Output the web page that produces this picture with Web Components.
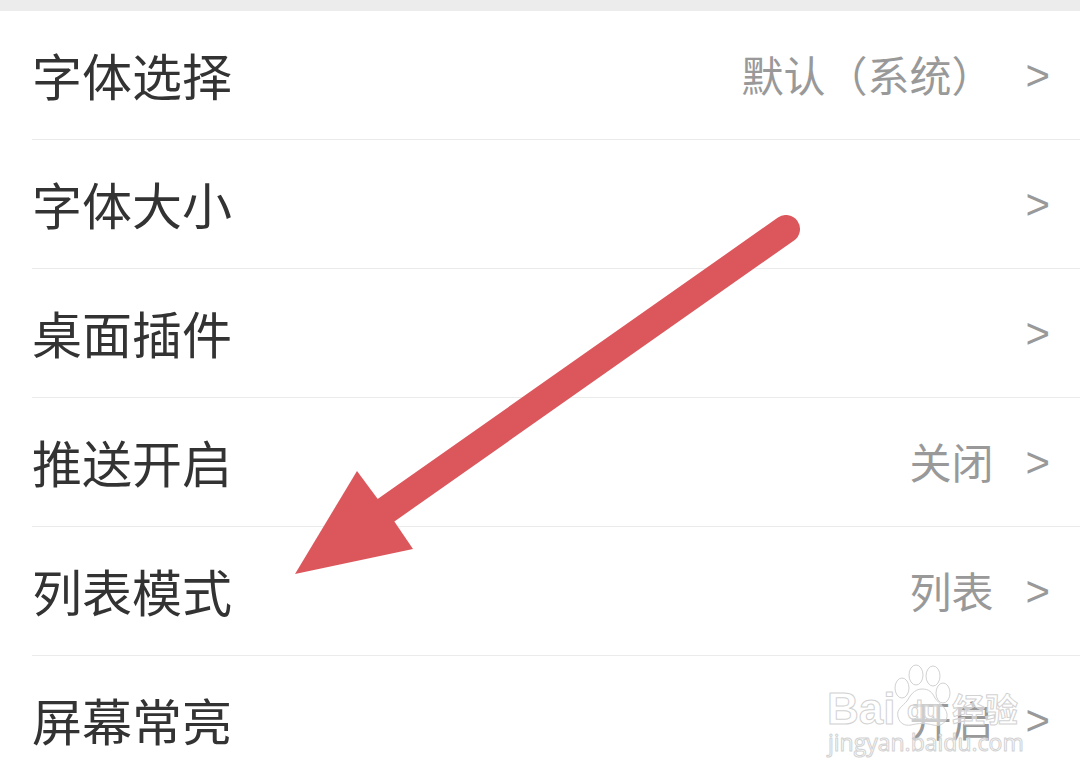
<!DOCTYPE html>
<html lang="zh-CN">
<head>
<meta charset="utf-8">
<meta name="viewport" content="width=device-width, initial-scale=1">
<title>设置</title>
<style>
  html, body { height: 100%; }
  body { margin: 0; overflow: hidden; background: #fff; font-family: "Noto Sans CJK SC", "Noto Sans", sans-serif; }
</style>
</head>
<body>
<settings-page>
  <settings-row label="字体选择" value="默认（系统）"></settings-row>
  <settings-row label="字体大小"></settings-row>
  <settings-row label="桌面插件"></settings-row>
  <settings-row label="推送开启" value="关闭"></settings-row>
  <settings-row label="列表模式" value="列表"></settings-row>
  <settings-row label="屏幕常亮" value="开启"></settings-row>
  <pointer-arrow slot="overlay"></pointer-arrow>
  <site-watermark slot="overlay"></site-watermark>
</settings-page>

<script>
class SettingsPage extends HTMLElement {
  constructor() {
    super();
    this.attachShadow({ mode: 'open' }).innerHTML = `
      <style>
        :host { display: block; position: relative; min-height: 100%; background: #fff; }
        .band { height: 11px; background: #ececec; }
        main { display: flex; flex-direction: column; padding-left: 32px; }
      </style>
      <div class="band"></div>
      <main><slot></slot></main>
      <slot name="overlay"></slot>`;
  }
}

class SettingsRow extends HTMLElement {
  constructor() {
    super();
    this.attachShadow({ mode: 'open' }).innerHTML = `
      <style>
        :host { display: block; border-bottom: 1px solid #ebebeb; }
        button {
          display: flex; align-items: center; width: 100%; height: 128px;
          margin: 0; padding: 0 30px 2px 0; border: 0; background: none; box-sizing: border-box;
          font: inherit; text-align: left; cursor: pointer;
        }
        .label { flex: 1; font-size: 50px; line-height: 72px; color: #333; }
        .value, .more { font-size: 42px; line-height: 60px; color: #999; }
        .more { margin-left: 32px; padding-top: 4px; font-family: "Liberation Sans", sans-serif; }
      </style>
      <button type="button">
        <span class="label"></span><span class="value"></span><span class="more" aria-hidden="true">&gt;</span>
      </button>`;
  }
  connectedCallback() {
    this.shadowRoot.querySelector('.label').textContent = this.getAttribute('label');
    this.shadowRoot.querySelector('.value').textContent = this.getAttribute('value') || '';
  }
}

class PointerArrow extends HTMLElement {
  constructor() {
    super();
    this.attachShadow({ mode: 'open' }).innerHTML = `
      <style>
        :host { display: block; position: absolute; left: 295px; top: 215px; pointer-events: none; }
        svg { display: block; }
      </style>
      <svg width="506" height="360" viewBox="295 215 506 360" aria-hidden="true">
        <path d="M786 229L375 518" stroke="#dc575c" stroke-width="28" stroke-linecap="round"/>
        <path d="M295 574L357 471L377 498L394 521L413 549Z" fill="#dc575c"/>
      </svg>`;
  }
}

class SiteWatermark extends HTMLElement {
  constructor() {
    super();
    this.attachShadow({ mode: 'open' }).innerHTML = `
      <style>
        :host { display: block; position: absolute; right: 56px; top: 660px; pointer-events: none; }
        svg { display: block; }
        text { font-family: "Liberation Sans", "Noto Sans CJK SC", sans-serif; }
        .brand { font-weight: 700; }
        .site { font-family: "Open Sans", sans-serif; }
      </style>
      <svg width="200" height="100" viewBox="824 660 200 100" fill="#fff" fill-opacity="0.5" stroke="#d2d2d2" stroke-width="1" stroke-linejoin="round">
        <ellipse cx="902" cy="688" rx="7" ry="10"/>
        <ellipse cx="916" cy="675" rx="7" ry="10"/>
        <ellipse cx="933" cy="676" rx="7" ry="10"/>
        <ellipse cx="943" cy="693" rx="7" ry="10"/>
        <path d="M922 689C914 689 910 696 907 701C903 706 896 709 898 717C900 724 905 726 911 725C919 723 926 723 933 725C941 727 948 722 947 714C946 707 939 704 935 698C932 692 929 689 922 689Z"/>
        <text class="brand" x="827" y="724" font-size="44">Bai</text>
        <text class="brand" x="907" y="719" font-size="26">du</text>
        <text class="brand" x="952" y="722" font-size="33">经验</text>
        <text class="site" x="828" y="751" font-size="23">jingyan.baidu.com</text>
      </svg>`;
  }
}

customElements.define('settings-page', SettingsPage);
customElements.define('settings-row', SettingsRow);
customElements.define('pointer-arrow', PointerArrow);
customElements.define('site-watermark', SiteWatermark);
</script>
</body>
</html>
